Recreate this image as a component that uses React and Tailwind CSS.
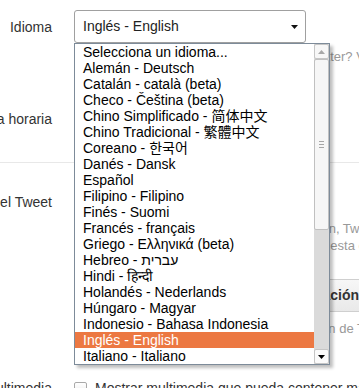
const LANGS = [
  "Selecciona un idioma...",
  "Alemán - Deutsch",
  "Catalán - català (beta)",
  "Checo - Čeština (beta)",
  "Chino Simplificado - 简体中文",
  "Chino Tradicional - 繁體中文",
  "Coreano - 한국어",
  "Danés - Dansk",
  "Español",
  "Filipino - Filipino",
  "Finés - Suomi",
  "Francés - français",
  "Griego - Ελληνικά (beta)",
  "Hebreo - עברית",
  "Hindi - हिन्दी",
  "Holandés - Nederlands",
  "Húngaro - Magyar",
  "Indonesio - Bahasa Indonesia",
  "Inglés - English",
  "Italiano - Italiano",
];

const SELECTED = "Inglés - English";

function Label({ children }) {
  return (
    <div className="w-[52px] shrink-0 flex justify-end whitespace-nowrap leading-[20px] text-[#333]">
      {children}
    </div>
  );
}

function Checkbox() {
  return (
    <span className="block w-[13px] h-[13px] shrink-0 rounded-[2px] border border-[#a9a9a9] bg-gradient-to-b from-white to-[#ececec]" />
  );
}

function Triangle({ color, up }) {
  return (
    <svg width="7" height="4" viewBox="0 0 7 4">
      <polygon points={up ? "0,4 7,4 3.5,0" : "0,0 7,0 3.5,4"} fill={color} />
    </svg>
  );
}

function Scrollbar() {
  return (
    <div className="w-[15px] shrink-0 flex flex-col bg-[#dadada]">
      <div className="h-[15px] flex items-center justify-center bg-[#f7f7f7] border border-[#c6c6c6] rounded-[2px]">
        <Triangle color="#a8a8a8" up />
      </div>
      <div className="h-[171px] flex flex-col items-center justify-center gap-[2px] bg-[#f6f6f6] border border-[#c0c0c0] rounded-[2px]">
        <span className="block w-[5px] h-px bg-[#a6a6a6]" />
        <span className="block w-[5px] h-px bg-[#a6a6a6]" />
        <span className="block w-[5px] h-px bg-[#a6a6a6]" />
      </div>
      <div className="flex-1" />
      <div className="h-[15px] flex items-center justify-center bg-[#fbfbfb] border border-[#c6c6c6] rounded-[2px]">
        <Triangle color="#000" />
      </div>
    </div>
  );
}

function LanguageList() {
  return (
    <div className="absolute left-[74px] top-[43px] w-[256px] h-[322px] flex border border-[#7d8b99] bg-white shadow-[3px_3px_3px_rgba(0,0,0,0.25)]">
      <div className="flex-1 flex flex-col">
        {LANGS.map((lang) => (
          <div
            key={lang}
            className={`h-[16px] leading-[16px] pl-[8px] whitespace-nowrap text-[14px] ${
              lang === SELECTED ? "bg-[#ec7842] text-white" : "text-black"
            }`}
          >
            {lang}
          </div>
        ))}
      </div>
      <Scrollbar />
    </div>
  );
}

export default function App() {
  return (
    <div className="relative w-[359px] h-[388px] overflow-hidden bg-white text-[14px] font-['Liberation_Sans','Noto_Sans_CJK_SC','DejaVu_Sans',sans-serif]">
      <div className="w-[440px] flex flex-col">
        {/* Idioma */}
        <div className="pt-[10px] h-[66px]">
          <div className="flex items-center h-[33px]">
            <Label>Idioma</Label>
            <div className="ml-[22px] w-[232px] h-[33px] flex items-center justify-between pl-[8px] pr-[7px] border border-[#a0a0a0] rounded-[3px] bg-white text-[#222]">
              <span>Inglés - English</span>
              <Triangle color="#111" />
            </div>
          </div>
          <div className="pt-[5px] pl-[131px] h-[23px] leading-[18px] text-[13px] text-[#999] whitespace-nowrap">
            ¿Te interesa ayudar a traducir Twitter? Visita el Centro de traducción.
          </div>
        </div>

        {/* Zona horaria */}
        <div className="pt-[36px] h-[97px] border-b border-[#e8e8e8]">
          <div className="flex items-center h-[33px]">
            <Label>Zona horaria</Label>
            <div className="ml-[22px] w-[232px] h-[33px] border border-[#a0a0a0] rounded-[3px] pl-[8px] leading-[31px] text-[#222]">
              (GMT-06:00) Ciudad de México
            </div>
          </div>
        </div>

        {/* Ubicación del Tweet */}
        <div className="pt-[29px] h-[215px] flex">
          <Label>Ubicación del Tweet</Label>
          <div className="ml-[22px] flex-1 flex flex-col">
            <div className="flex items-center gap-[8px] h-[20px] text-[#333]">
              <Checkbox />
              <span className="whitespace-nowrap">Agregar una ubicación a mis Tweets</span>
            </div>
            <div className="pt-[8px] h-[67px] shrink-0 text-[13px] leading-[17px] text-[#999] whitespace-nowrap">
              <div className="pl-[14px]">Cuando decides twittear con una ubicación, Twitter almacena esa ubicación.</div>
              <div className="pl-[93px]">Puedes activar o desactivar esta configuración antes de cada Tweet.</div>
            </div>
            <div className="ml-[18px] w-[280px] h-[33px] shrink-0 flex items-center justify-end pr-[12px] border border-[#cfcfcf] rounded-[4px] bg-gradient-to-b from-[#f7f7f7] to-[#e9e9e9] font-bold text-[#333] whitespace-nowrap">
              Borrar toda la información de ubicación
            </div>
            <div className="pt-[8px] text-[13px] leading-[17px] text-[#999] whitespace-nowrap">
              Esto borrará toda la información de ubicación de Tweets anteriores.
            </div>
          </div>
        </div>

        {/* Multimedia */}
        <div className="flex">
          <Label>Multimedia</Label>
          <div className="ml-[22px] flex items-center gap-[8px] h-[20px] text-[#333] whitespace-nowrap">
            <Checkbox />
            <span>Mostrar multimedia que pueda contener material delicado</span>
          </div>
        </div>
      </div>

      <LanguageList />
    </div>
  );
}
